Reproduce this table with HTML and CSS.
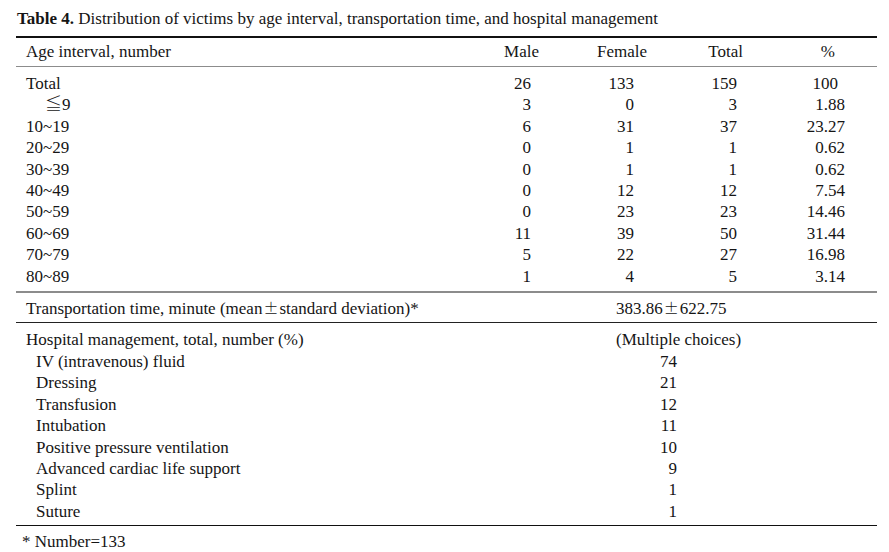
FILE: index.html
```html
<!DOCTYPE html>
<html lang="en">
<head>
<meta charset="utf-8">
<title>Table 4</title>
<link rel="stylesheet" href="styles.css">
</head>
<body>
<div class="wrap">
  <p class="caption"><b>Table 4.</b> Distribution of victims by age interval, transportation time, and hospital management</p>
  <table class="tbl">
    <colgroup>
      <col class="c-label"><col class="c-male"><col class="c-female"><col class="c-total"><col class="c-pct">
    </colgroup>
    <thead>
      <tr class="head">
        <th class="lbl">Age interval, number</th>
        <th class="h-male">Male</th>
        <th class="h-female">Female</th>
        <th class="h-total">Total</th>
        <th class="h-pct">%</th>
      </tr>
    </thead>
    <tbody class="ages">
      <tr class="first"><td class="lbl">Total</td><td class="m">26</td><td class="f">133</td><td class="t">159</td><td class="p p-whole">100</td></tr>
      <tr><td class="lbl sub"><span class="cjk">≦</span>9</td><td class="m">3</td><td class="f">0</td><td class="t">3</td><td class="p">1.88</td></tr>
      <tr><td class="lbl">10~19</td><td class="m">6</td><td class="f">31</td><td class="t">37</td><td class="p">23.27</td></tr>
      <tr><td class="lbl">20~29</td><td class="m">0</td><td class="f">1</td><td class="t">1</td><td class="p">0.62</td></tr>
      <tr><td class="lbl">30~39</td><td class="m">0</td><td class="f">1</td><td class="t">1</td><td class="p">0.62</td></tr>
      <tr><td class="lbl">40~49</td><td class="m">0</td><td class="f">12</td><td class="t">12</td><td class="p">7.54</td></tr>
      <tr><td class="lbl">50~59</td><td class="m">0</td><td class="f">23</td><td class="t">23</td><td class="p">14.46</td></tr>
      <tr><td class="lbl">60~69</td><td class="m">11</td><td class="f">39</td><td class="t">50</td><td class="p">31.44</td></tr>
      <tr><td class="lbl">70~79</td><td class="m">5</td><td class="f">22</td><td class="t">27</td><td class="p">16.98</td></tr>
      <tr class="last"><td class="lbl">80~89</td><td class="m">1</td><td class="f">4</td><td class="t">5</td><td class="p">3.14</td></tr>
    </tbody>
    <tbody class="transport">
      <tr>
        <td class="lbl">Transportation time, minute (mean<span class="cjk pm">±</span>standard deviation)*</td>
        <td colspan="4" class="span">383.86<span class="cjk pm">±</span>622.75</td>
      </tr>
    </tbody>
    <tbody class="mgmt">
      <tr class="first"><td class="lbl">Hospital management, total, number (%)</td><td colspan="4" class="span">(Multiple choices)</td></tr>
      <tr><td class="lbl item">IV (intravenous) fluid</td><td colspan="4" class="span"><span class="n">74</span></td></tr>
      <tr><td class="lbl item">Dressing</td><td colspan="4" class="span"><span class="n">21</span></td></tr>
      <tr><td class="lbl item">Transfusion</td><td colspan="4" class="span"><span class="n">12</span></td></tr>
      <tr><td class="lbl item">Intubation</td><td colspan="4" class="span"><span class="n">11</span></td></tr>
      <tr><td class="lbl item">Positive pressure ventilation</td><td colspan="4" class="span"><span class="n">10</span></td></tr>
      <tr><td class="lbl item">Advanced cardiac life support</td><td colspan="4" class="span"><span class="n">9</span></td></tr>
      <tr><td class="lbl item">Splint</td><td colspan="4" class="span"><span class="n">1</span></td></tr>
      <tr class="last"><td class="lbl item">Suture</td><td colspan="4" class="span"><span class="n">1</span></td></tr>
    </tbody>
  </table>
  <p class="note">* Number=133</p>
</div>
</body>
</html>
```

FILE: styles.css
```css
html, body {
  margin: 0;
  padding: 0;
  background: #ffffff;
}

body {
  font-family: "Liberation Serif", "Times New Roman", serif;
  font-size: 17px;
  color: #151515;
}

.wrap {
  width: 861px;
  margin-left: 16px;
}

.caption {
  margin: 8px 0 0 1px;
  line-height: 21px;
  height: 28px;
  white-space: nowrap;
}

.caption b {
  font-weight: bold;
}

.tbl {
  width: 861px;
  border-collapse: collapse;
  table-layout: fixed;
  border-top: 2px solid #111;
  border-bottom: 1.5px solid #111;
}

.c-label { width: 424px; }
.c-male { width: 105px; }
.c-female { width: 105px; }
.c-total { width: 105px; }
.c-pct { width: 122px; }

th, td {
  padding: 0;
  font-weight: normal;
  line-height: 21.4px;
  white-space: nowrap;
  vertical-align: baseline;
}

.lbl {
  text-align: left;
  padding-left: 10px;
}

.lbl.sub { padding-left: 29px; }
.lbl.item { padding-left: 20px; }

.head th {
  line-height: 21px;
  padding-top: 3px;
  padding-bottom: 4px;
  border-bottom: 1.5px solid #8c8c8c;
}

.h-male { text-align: right; padding-right: 6px !important; }
.h-female { text-align: right; padding-right: 3px !important; }
.h-total { text-align: right; padding-right: 12px !important; }
.h-pct { text-align: right; padding-right: 42px !important; }

.m, .f, .t, .p { text-align: right; }
.m { padding-right: 14px; }
.f { padding-right: 16px; }
.t { padding-right: 18px; }
.p { padding-right: 32px; }
.p.p-whole { padding-right: 39px; }

.ages tr.first td { padding-top: 6px; }
.ages tr.last td {
  padding-bottom: 4px;
  border-bottom: 2px solid #8c8c8c;
}

.transport td {
  padding-top: 5px;
  padding-bottom: 3px;
  border-bottom: 1.5px solid #222;
}

.span {
  text-align: left;
  padding-left: 176px;
}

.n {
  display: inline-block;
  width: 61px;
  text-align: right;
}

.mgmt tr.first td { padding-top: 6px; }
.mgmt tr.last td { padding-bottom: 3px; }

.cjk {
  font-family: "Noto Sans CJK JP", "DejaVu Sans", sans-serif;
  font-weight: 300;
  line-height: 1;
}

.pm {
  font-size: 15px;
  padding: 0 1px;
}

.note {
  margin: 0 0 0 6px;
  padding-top: 5px;
  line-height: 21.4px;
}
```
